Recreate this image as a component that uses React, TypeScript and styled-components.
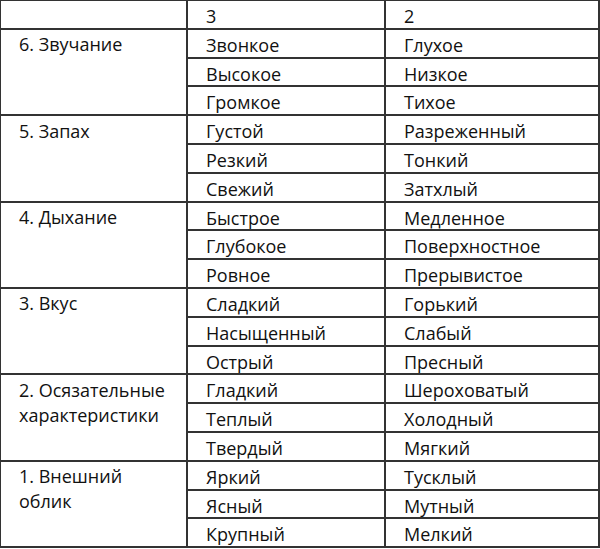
import React from 'react';
import styled, { createGlobalStyle } from 'styled-components';

const GlobalStyle = createGlobalStyle`
  html, body {
    margin: 0;
    padding: 0;
    background: #ffffff;
  }
  body {
    font-family: 'Open Sans', 'Noto Sans', 'DejaVu Sans', sans-serif;
    color: #111111;
  }
`;

interface Group {
    title: string;
    pairs: [string, string][];
}

const groups: Group[] = [
    {
        title: '6. Звучание',
        pairs: [['Звонкое', 'Глухое'], ['Высокое', 'Низкое'], ['Громкое', 'Тихое']],
    },
    {
        title: '5. Запах',
        pairs: [['Густой', 'Разреженный'], ['Резкий', 'Тонкий'], ['Свежий', 'Затхлый']],
    },
    {
        title: '4. Дыхание',
        pairs: [['Быстрое', 'Медленное'], ['Глубокое', 'Поверхностное'], ['Ровное', 'Прерывистое']],
    },
    {
        title: '3. Вкус',
        pairs: [['Сладкий', 'Горький'], ['Насыщенный', 'Слабый'], ['Острый', 'Пресный']],
    },
    {
        title: '2. Осязательные характеристики',
        pairs: [['Гладкий', 'Шероховатый'], ['Теплый', 'Холодный'], ['Твердый', 'Мягкий']],
    },
    {
        title: '1. Внешний облик',
        pairs: [['Яркий', 'Тусклый'], ['Ясный', 'Мутный'], ['Крупный', 'Мелкий']],
    },
];

const Table = styled.table`
    border-collapse: collapse;
    table-layout: fixed;
    width: 599px;
    margin: -1px 0 0 -1px;
    font-size: 18px;
    line-height: 22px;
`;

const Row = styled.tr`
    height: 28.8px;
`;

const Cell = styled.td`
    border: 2px solid #333333;
    padding: 4px 4px 0 18px;
    vertical-align: top;
    text-align: left;
    white-space: nowrap;
`;

const TitleCell = styled(Cell)`
    white-space: normal;
    padding-top: 2.5px;
    padding-right: 17px;
    line-height: 25px;
`;

const App: React.FC = () => {
    return (
        <>
            <GlobalStyle />
            <Table>
                <colgroup>
                    <col style={{ width: 187 }} />
                    <col style={{ width: 198 }} />
                    <col style={{ width: 214 }} />
                </colgroup>
                <tbody>
                    <Row>
                        <Cell />
                        <Cell>{'3'}</Cell>
                        <Cell>{'2'}</Cell>
                    </Row>
                    {groups.map((group) =>
                        group.pairs.map(([high, low], index) => (
                            <Row key={group.title + high}>
                                {index === 0 && (
                                    <TitleCell rowSpan={group.pairs.length}>
                                        {group.title}
                                    </TitleCell>
                                )}
                                <Cell>{high}</Cell>
                                <Cell>{low}</Cell>
                            </Row>
                        )),
                    )}
                </tbody>
            </Table>
        </>
    );
};

export default App;
